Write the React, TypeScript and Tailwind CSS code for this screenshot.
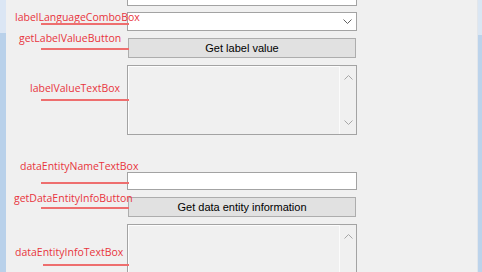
import type { ReactNode } from "react";

type NoteProps = {
  text: string;
  textClass: string;
  lineClass: string;
};

function Note({ text, textClass, lineClass }: NoteProps) {
  return (
    <>
      <span
        className={`absolute whitespace-nowrap text-[10.5px] leading-[12px] text-[#e8353d] [font-family:'Open_Sans',sans-serif] ${textClass}`}
      >
        {text}
      </span>
      <span className={`absolute h-[2px] bg-[#ee6e6e] ${lineClass}`} />
    </>
  );
}

function Chevron({ up = false, color }: { up?: boolean; color: string }) {
  return (
    <svg width="9" height="5" viewBox="0 0 9 5" fill="none">
      <polyline
        points={up ? "0.5,4.5 4.5,0.5 8.5,4.5" : "0.5,0.5 4.5,4.5 8.5,0.5"}
        stroke={color}
        strokeWidth="1"
      />
    </svg>
  );
}

function ScrollBox({ className, children }: { className: string; children?: ReactNode }) {
  return (
    <div className={`relative flex w-[230px] shrink-0 border border-[#a3a3a3] bg-[#f0f0f0] ${className}`}>
      <div className="flex-1 border-l border-t border-[#fdfdfd]" />
      <div className="flex w-[17px] flex-col items-center justify-between border-l border-[#fbfbfb] py-[9px]">
        <Chevron up color="#a6a6a6" />
        <Chevron color="#a6a6a6" />
      </div>
      {children}
    </div>
  );
}

export default function App() {
  return (
    <div className="flex h-[272px] w-[482px] overflow-hidden bg-[#f0f0f0] [font-family:'Liberation_Sans',Arial,sans-serif]">
      <div className="flex w-[6px] flex-col">
        <div className="h-[33px] bg-[#dbe6f4]" />
        <div className="flex-1 bg-[#b9d1ea]" />
      </div>

      <div className="flex flex-1 flex-col pl-[121px]">
        <div className="mt-[-15px] flex h-[21px] w-[230px] shrink-0 items-end overflow-hidden border border-[#a3a3a3] bg-white px-[3px] pb-[3px] text-[11px] leading-[14px] text-black">
          DataTest
        </div>

        <div className="relative mt-[6px] flex h-[19px] w-[230px] shrink-0 items-center justify-end border border-[#a3a3a3] bg-white pr-[4px]">
          <Chevron color="#606060" />
          <Note
            text="labelLanguageComboBox"
            textClass="left-[-113px] top-[-2px]"
            lineClass="left-[-87px] top-[10px] w-[88px]"
          />
        </div>

        <div className="relative ml-[1px] mt-[7px] flex h-[20px] w-[228px] shrink-0 items-center justify-center border border-[#adadad] bg-[#e1e1e1] text-[11px] text-black">
          Get label value
          <Note
            text="getLabelValueButton"
            textClass="left-[-110px] top-[-7px]"
            lineClass="left-[-88px] top-[9px] w-[88px]"
          />
        </div>

        <ScrollBox className="mt-[7px] h-[70px]">
          <Note
            text="labelValueTextBox"
            textClass="left-[-98px] top-[16px]"
            lineClass="left-[-87px] top-[33px] w-[88px]"
          />
        </ScrollBox>

        <div className="relative mt-[37px] h-[18px] w-[230px] shrink-0 border border-[#a3a3a3] bg-white">
          <Note
            text="dataEntityNameTextBox"
            textClass="left-[-108px] top-[-13px]"
            lineClass="left-[-87px] top-[9px] w-[88px]"
          />
        </div>

        <div className="relative ml-[1px] mt-[7px] flex h-[20px] w-[228px] shrink-0 items-center justify-center border border-[#adadad] bg-[#e1e1e1] text-[11px] text-black">
          Get data entity information
          <Note
            text="getDataEntityInfoButton"
            textClass="left-[-115px] top-[-6px]"
            lineClass="left-[-88px] top-[9px] w-[88px]"
          />
        </div>

        <ScrollBox className="mt-[7px] h-[70px]">
          <Note
            text="dataEntityInfoTextBox"
            textClass="left-[-113px] top-[21px]"
            lineClass="left-[-85px] top-[39px] w-[86px]"
          />
        </ScrollBox>
      </div>

      <div className="flex w-[5px] flex-col border-l border-[#e3e6ea]">
        <div className="h-[35px] bg-[#dae6f3]" />
        <div className="flex-1 bg-[#bcd3eb]" />
      </div>
    </div>
  );
}
